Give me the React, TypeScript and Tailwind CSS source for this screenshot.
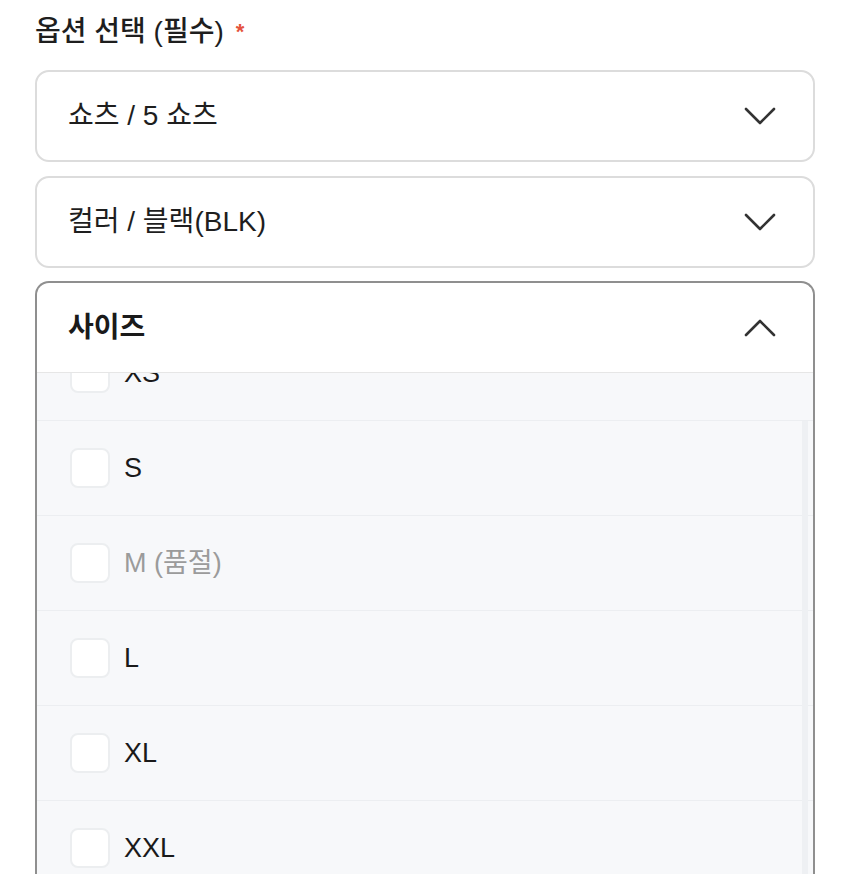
import React from "react";

const font = { fontFamily: '"Liberation Sans", "Noto Sans CJK KR", sans-serif' };

function Chevron({ up = false }: { up?: boolean }) {
  return (
    <svg width="32" height="20" viewBox="0 0 32 20" fill="none" className="shrink-0">
      {up ? (
        <path d="M2 17 L16 3 L30 17" stroke="#333" strokeWidth="2.6" strokeLinecap="round" strokeLinejoin="round" />
      ) : (
        <path d="M2 3 L16 17 L30 3" stroke="#333" strokeWidth="2.6" strokeLinecap="round" strokeLinejoin="round" />
      )}
    </svg>
  );
}

const sizes = [
  { label: "XS", soldOut: false },
  { label: "S", soldOut: false },
  { label: "M (품절)", soldOut: true },
  { label: "L", soldOut: false },
  { label: "XL", soldOut: false },
  { label: "XXL", soldOut: false },
];

export default function App() {
  return (
    <div className="h-[874px] w-[850px] overflow-hidden bg-white" style={font}>
      <div className="flex flex-col px-[35px] pt-[14px]">
        <div className="flex h-[36px] items-center gap-[12px] text-[28px] font-medium leading-none text-[#1e1e1e]">
          <span>옵션 선택 (필수)</span>
          <span className="text-[22px] font-bold text-[#e5533d]">*</span>
        </div>

        <div className="mt-[20px] flex h-[92px] items-center justify-between rounded-[14px] border-2 border-[#dcdcdc] bg-white pl-[31px] pr-[37px]">
          <span className="text-[28px] text-[#1e1e1e]">쇼츠 / 5 쇼츠</span>
          <Chevron />
        </div>

        <div className="mt-[14px] flex h-[92px] items-center justify-between rounded-[14px] border-2 border-[#dcdcdc] bg-white pl-[31px] pr-[37px]">
          <span className="text-[28px] text-[#1e1e1e]">컬러 / 블랙(BLK)</span>
          <Chevron />
        </div>

        <div className="mt-[13px] flex h-[620px] flex-col overflow-hidden rounded-t-[14px] border-2 border-b-0 border-[#8f8f8f] bg-white">
          <div className="flex h-[90px] shrink-0 items-center justify-between border-b border-[#e6e6e6] pl-[31px] pr-[37px]">
            <span className="text-[28px] font-bold text-[#1a1a1a]">사이즈</span>
            <Chevron up />
          </div>
          <div className="relative flex-1 overflow-hidden bg-[#f7f8fa]">
            <div className="-mt-[47px] flex flex-col">
              {sizes.map((s) => (
                <div key={s.label} className="flex h-[95px] items-center gap-[14px] border-b border-[#eceef1] pl-[33px]">
                  <div className="h-[40px] w-[40px] rounded-[8px] border-2 border-[#eceef0] bg-white" />
                  <span className={`text-[27px] ${s.soldOut ? "text-[#9b9b9b]" : "text-[#1a1a1a]"}`}>{s.label}</span>
                </div>
              ))}
            </div>
            <div className="absolute right-[5px] top-[48px] bottom-0 w-[6px] bg-[#eef0f3]" />
          </div>
        </div>
      </div>
    </div>
  );
}
